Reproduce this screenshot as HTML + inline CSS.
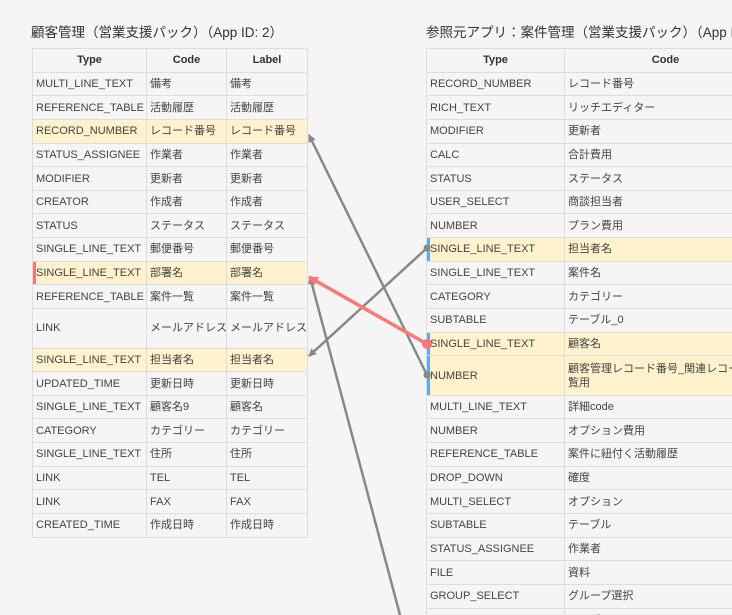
<!DOCTYPE html>
<html><head><meta charset="utf-8"><style>
body{margin:0;background:#f5f5f5;width:732px;height:615px;overflow:hidden;position:relative;font-family:"Liberation Sans","Noto Sans CJK JP",sans-serif;color:#444;}
#wrap{position:absolute;left:0;top:0;width:732px;height:615px;overflow:hidden}
h2{position:absolute;margin:0;font-weight:normal;font-size:13.5px;color:#333;top:21px;white-space:nowrap}
table{position:absolute;border-collapse:collapse;table-layout:fixed;font-size:11px;top:48px}
td,th{border:1px solid #ddd;padding:0 3px;height:23.65px;line-height:14px;white-space:nowrap;overflow:hidden;vertical-align:middle;box-sizing:border-box}
th{font-weight:bold;text-align:center;color:#333}
tr.h td{background:#fff2cc}
tr.t td{height:39.5px}
.bl td:first-child{box-shadow:inset 3px 0 0 #5aabf0}
.rl td:first-child{box-shadow:inset 3px 0 0 #f07777}
svg{position:absolute;left:0;top:0}
</style></head><body><div id="wrap">
<h2 style="left:31px">顧客管理（営業支援パック）（App ID: 2）</h2>
<h2 style="left:426px">参照元アプリ：案件管理（営業支援パック）（App ID: 3）</h2>
<table style="left:32px;width:275px">
<col style="width:114px"><col style="width:80px"><col style="width:81px">
<tr><th>Type</th><th>Code</th><th>Label</th></tr>
<tr><td>MULTI_LINE_TEXT</td><td>備考</td><td>備考</td></tr>
<tr><td>REFERENCE_TABLE</td><td>活動履歴</td><td>活動履歴</td></tr>
<tr class="h"><td>RECORD_NUMBER</td><td>レコード番号</td><td>レコード番号</td></tr>
<tr><td>STATUS_ASSIGNEE</td><td>作業者</td><td>作業者</td></tr>
<tr><td>MODIFIER</td><td>更新者</td><td>更新者</td></tr>
<tr><td>CREATOR</td><td>作成者</td><td>作成者</td></tr>
<tr><td>STATUS</td><td>ステータス</td><td>ステータス</td></tr>
<tr><td>SINGLE_LINE_TEXT</td><td>郵便番号</td><td>郵便番号</td></tr>
<tr class="h rl"><td>SINGLE_LINE_TEXT</td><td>部署名</td><td>部署名</td></tr>
<tr><td>REFERENCE_TABLE</td><td>案件一覧</td><td>案件一覧</td></tr>
<tr class="t"><td>LINK</td><td>メールアドレス</td><td>メールアドレス</td></tr>
<tr class="h"><td>SINGLE_LINE_TEXT</td><td>担当者名</td><td>担当者名</td></tr>
<tr><td>UPDATED_TIME</td><td>更新日時</td><td>更新日時</td></tr>
<tr><td>SINGLE_LINE_TEXT</td><td>顧客名9</td><td>顧客名</td></tr>
<tr><td>CATEGORY</td><td>カテゴリー</td><td>カテゴリー</td></tr>
<tr><td>SINGLE_LINE_TEXT</td><td>住所</td><td>住所</td></tr>
<tr><td>LINK</td><td>TEL</td><td>TEL</td></tr>
<tr><td>LINK</td><td>FAX</td><td>FAX</td></tr>
<tr><td>CREATED_TIME</td><td>作成日時</td><td>作成日時</td></tr>
</table>
<table style="left:426px;width:340px">
<col style="width:138px"><col style="width:202px">
<tr><th>Type</th><th>Code</th></tr>
<tr><td>RECORD_NUMBER</td><td>レコード番号</td></tr>
<tr><td>RICH_TEXT</td><td>リッチエディター</td></tr>
<tr><td>MODIFIER</td><td>更新者</td></tr>
<tr><td>CALC</td><td>合計費用</td></tr>
<tr><td>STATUS</td><td>ステータス</td></tr>
<tr><td>USER_SELECT</td><td>商談担当者</td></tr>
<tr><td>NUMBER</td><td>プラン費用</td></tr>
<tr class="h bl"><td>SINGLE_LINE_TEXT</td><td>担当者名</td></tr>
<tr><td>SINGLE_LINE_TEXT</td><td>案件名</td></tr>
<tr><td>CATEGORY</td><td>カテゴリー</td></tr>
<tr><td>SUBTABLE</td><td>テーブル_0</td></tr>
<tr class="h bl"><td>SINGLE_LINE_TEXT</td><td>顧客名</td></tr>
<tr class="h bl t"><td>NUMBER</td><td style="white-space:normal;word-break:break-all">顧客管理レコード番号_関連レコード一覧用</td></tr>
<tr><td>MULTI_LINE_TEXT</td><td>詳細code</td></tr>
<tr><td>NUMBER</td><td>オプション費用</td></tr>
<tr><td>REFERENCE_TABLE</td><td>案件に紐付く活動履歴</td></tr>
<tr><td>DROP_DOWN</td><td>確度</td></tr>
<tr><td>MULTI_SELECT</td><td>オプション</td></tr>
<tr><td>SUBTABLE</td><td>テーブル</td></tr>
<tr><td>STATUS_ASSIGNEE</td><td>作業者</td></tr>
<tr><td>FILE</td><td>資料</td></tr>
<tr><td>GROUP_SELECT</td><td>グループ選択</td></tr>
<tr><td>USER_SELECT</td><td>ユーザー</td></tr>
</table>
<svg width="732" height="615">
<defs>
<marker id="ag" markerWidth="8" markerHeight="8" refX="7" refY="4" orient="auto" markerUnits="userSpaceOnUse"><path d="M0,0L8,4L0,8z" fill="#888"/></marker>
<marker id="ar" markerWidth="10" markerHeight="10" refX="9" refY="5" orient="auto" markerUnits="userSpaceOnUse"><path d="M0,0L10,5L0,10z" fill="#f77"/></marker>
</defs>
<g stroke="#888" stroke-width="2.5" fill="none">
<line x1="427" y1="375" x2="309" y2="135" marker-end="url(#ag)"/>
<line x1="427" y1="248" x2="309" y2="356" marker-end="url(#ag)"/>
<line x1="400" y1="615" x2="310" y2="277" marker-end="url(#ag)"/>
</g>
<line x1="427" y1="344" x2="309" y2="277" stroke="#f77" stroke-width="3.5" marker-end="url(#ar)"/>
<circle cx="427" cy="248" r="3.5" fill="#888"/>
<circle cx="427" cy="375" r="3.5" fill="#888"/>
<circle cx="427" cy="344" r="5" fill="#f77"/>
</svg>
</div></body></html>
